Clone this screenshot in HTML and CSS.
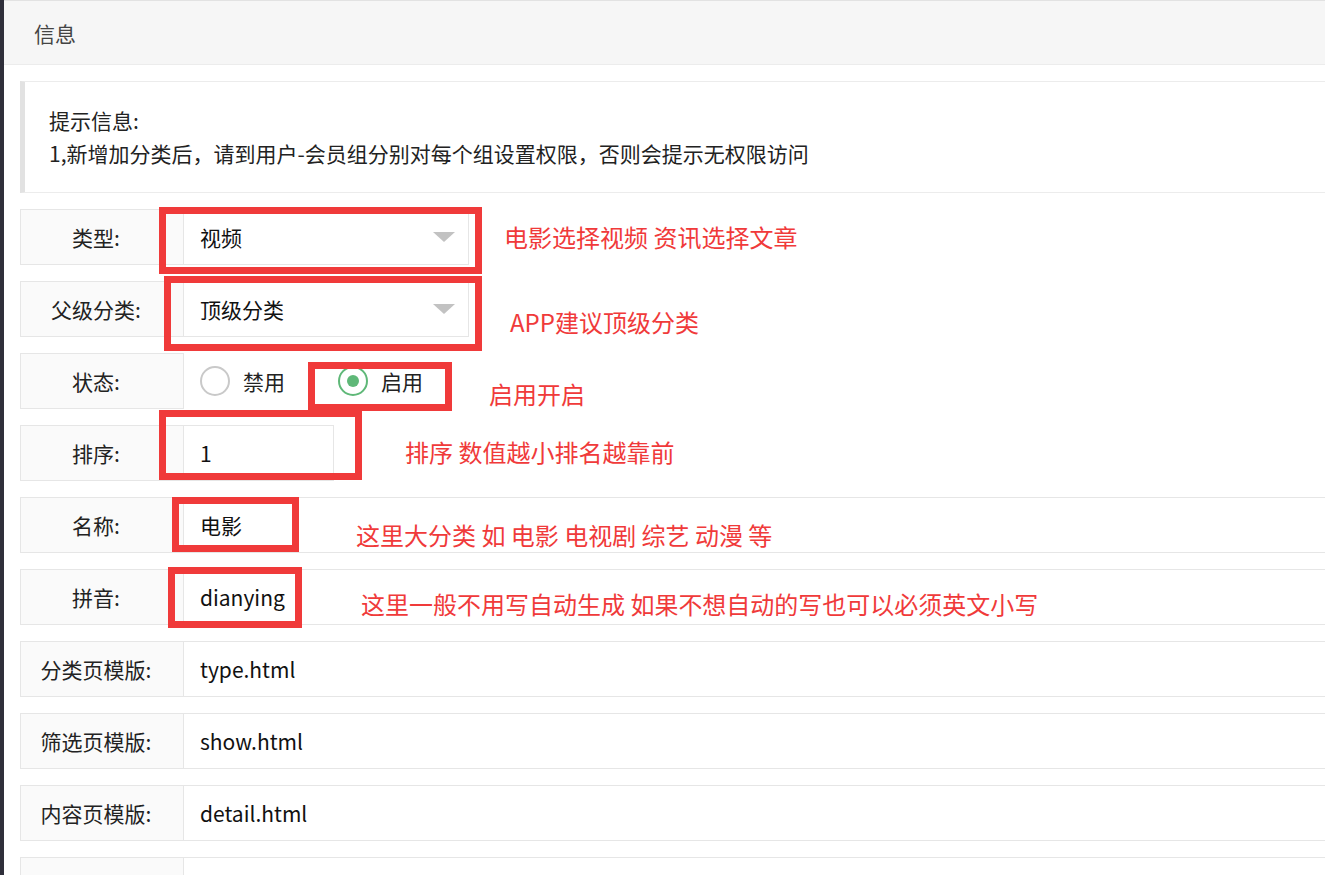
FILE: index.html
```html
<!DOCTYPE html>
<html lang="zh-CN">
<head>
    <meta charset="UTF-8">
    <meta name="viewport" content="width=device-width, initial-scale=1.0">
    <title>分类编辑</title>
    <link rel="stylesheet" href="styles.css">
</head>
<body>
    <div class="page">
        <div class="side"></div>
        <div class="card">
            <div class="card-header">信息</div>
            <div class="card-body">
                <div class="quote">
                    提示信息:<br>
                    1,新增加分类后，请到用户-会员组分别对每个组设置权限，否则会提示无权限访问
                </div>

                <div class="form">
                    <div class="form-item">
                        <div class="form-label">类型:</div>
                        <div class="input select"><span>视频</span><i class="arrow"></i></div>
                        <span class="mark" id="mark1"></span>
                        <span class="note" id="note1">电影选择视频 资讯选择文章</span>
                    </div>

                    <div class="form-item">
                        <div class="form-label">父级分类:</div>
                        <div class="input select"><span>顶级分类</span><i class="arrow"></i></div>
                        <span class="mark" id="mark2"></span>
                        <span class="note" id="note2">APP建议顶级分类</span>
                    </div>

                    <div class="form-item">
                        <div class="form-label">状态:</div>
                        <div class="radios">
                            <div class="radio"><i class="radio-icon"></i>禁用</div>
                            <div class="radio checked"><i class="radio-icon"></i>启用</div>
                        </div>
                        <span class="mark" id="mark3"></span>
                        <span class="note" id="note3">启用开启</span>
                    </div>

                    <div class="form-item">
                        <div class="form-label">排序:</div>
                        <div class="input short">1</div>
                        <span class="mark" id="mark4"></span>
                        <span class="note" id="note4">排序 数值越小排名越靠前</span>
                    </div>

                    <div class="form-item">
                        <div class="form-label">名称:</div>
                        <div class="input block">电影</div>
                        <span class="mark" id="mark5"></span>
                        <span class="note" id="note5">这里大分类 如 电影 电视剧 综艺 动漫 等</span>
                    </div>

                    <div class="form-item">
                        <div class="form-label">拼音:</div>
                        <div class="input block">dianying</div>
                        <span class="mark" id="mark6"></span>
                        <span class="note" id="note6">这里一般不用写自动生成 如果不想自动的写也可以必须英文小写</span>
                    </div>

                    <div class="form-item">
                        <div class="form-label">分类页模版:</div>
                        <div class="input block">type.html</div>
                    </div>

                    <div class="form-item">
                        <div class="form-label">筛选页模版:</div>
                        <div class="input block">show.html</div>
                    </div>

                    <div class="form-item">
                        <div class="form-label">内容页模版:</div>
                        <div class="input block">detail.html</div>
                    </div>

                    <div class="form-item">
                        <div class="form-label"></div>
                        <div class="input block"></div>
                    </div>
                </div>
            </div>
        </div>
    </div>
</body>
</html>
```

FILE: styles.css
```css
:root {
    --line: #e6e6e6;
    --text: #333;
    --mark: #f03a3a;
    --green: #5fb878;
}

* {
    margin: 0;
    padding: 0;
    box-sizing: border-box;
}

body {
    width: 100vw;
    height: 100vh;
    overflow: hidden;
    background: #fff;
    font-family: "Noto Sans CJK SC", sans-serif;
    font-size: 21px;
    color: var(--text);
}

.page {
    display: flex;
    width: 1345px;
}

.side {
    width: 4px;
    flex-shrink: 0;
    background: #2f2f3a;
}

.card {
    flex: 1;
    border-top: 1px solid #e2e2e2;
}

.card-header {
    height: 64px;
    padding: 2px 0 0 30px;
    line-height: 61px;
    background: #f6f6f6;
    border-bottom: 1px solid #ececec;
    color: #444;
}

.card-body {
    padding: 16px 16px;
}

.quote {
    height: 112px;
    padding: 22px 24px;
    line-height: 33px;
    border: 1px solid #ececec;
    border-left: 5px solid #e2e2e2;
    color: #222;
    margin-bottom: 16px;
}

.form-item {
    position: relative;
    display: flex;
    height: 56px;
    margin-bottom: 16px;
}

.form-label {
    width: 164px;
    flex-shrink: 0;
    padding-right: 12px;
    text-align: center;
    line-height: 54px;
    background: #fafafa;
    border: 1px solid var(--line);
    color: #222;
}

.input {
    margin-left: -1px;
    padding-left: 16px;
    line-height: 54px;
    border: 1px solid var(--line);
    color: #111;
}

.input.block {
    flex: 1;
}

.input.short {
    width: 151px;
}

.select {
    width: 286px;
    display: flex;
    justify-content: space-between;
    align-items: center;
    padding-right: 13px;
}

.arrow {
    width: 0;
    height: 0;
    border-top: 10px solid #c2c2c2;
    border-left: 11px solid transparent;
    border-right: 11px solid transparent;
}

/* radio group */
.radios {
    display: flex;
    align-items: center;
    padding-left: 16px;
    gap: 53px;
    color: #222;
}

.radio {
    display: flex;
    align-items: center;
    gap: 13px;
}

.radio-icon {
    width: 30px;
    height: 30px;
    border-radius: 50%;
    border: 2px solid #c9c9c9;
    display: flex;
    align-items: center;
    justify-content: center;
}

.radio.checked .radio-icon {
    border-color: var(--green);
}

.radio.checked .radio-icon::after {
    content: "";
    width: 12px;
    height: 12px;
    border-radius: 50%;
    background: var(--green);
}

/* red annotation boxes and notes drawn over the form */
.mark {
    position: absolute;
    border: 7px solid var(--mark);
}

#mark1 { left: 139px; top: -2px; width: 323px; height: 67px; }
#mark2 { left: 144px; top: -5px; width: 318px; height: 75px; }
#mark3 { left: 288px; top: 9px; width: 144px; height: 49px; }
#mark4 { left: 139px; top: -15px; width: 203px; height: 70px; }
#mark5 { left: 152px; top: 0; width: 127px; height: 55px; }
#mark6 { left: 148px; top: -2px; width: 134px; height: 61px; }

.note {
    position: absolute;
    font-size: 24px;
    line-height: 30px;
    color: var(--mark);
    white-space: nowrap;
}

#note1 { left: 484px; top: 13px; }
#note2 { left: 490px; top: 26px; }
#note3 { left: 469px; top: 26px; }
#note4 { left: 385px; top: 12px; }
#note5 { left: 336px; top: 23px; }
#note6 { left: 341px; top: 20px; }
```
